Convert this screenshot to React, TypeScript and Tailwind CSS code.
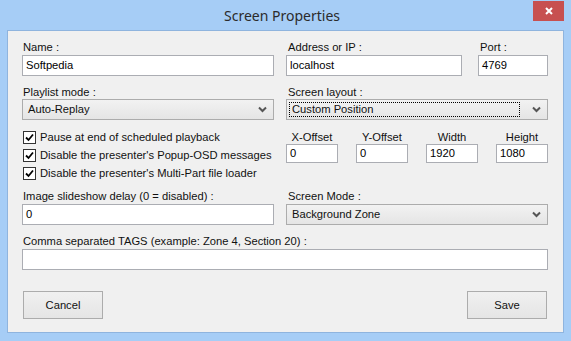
import React from 'react';

const font = "font-['Tahoma','Liberation_Sans',sans-serif]";

function Chevron() {
  return (
    <svg width="9" height="7" viewBox="0 0 9 7" className="shrink-0">
      <path d="M1 1.5 L4.5 5 L8 1.5" stroke="#555" strokeWidth="2" fill="none" />
    </svg>
  );
}

function Check() {
  return (
    <span className="flex h-[13px] w-[13px] shrink-0 items-center justify-center border border-[#333] bg-white">
      <svg width="9" height="9" viewBox="0 0 9 9">
        <path d="M1 4.5 L3.5 7 L8 1.5" stroke="#000" strokeWidth="1.8" fill="none" />
      </svg>
    </span>
  );
}

function Field({ value, className = '' }: { value: string; className?: string }) {
  return (
    <div className={`flex items-center border border-[#abadb3] bg-white px-[3px] text-black ${className}`}>
      {value}
    </div>
  );
}

function Select({ value, focused = false }: { value: string; focused?: boolean }) {
  return (
    <div className="flex h-[21px] items-center border border-[#acacac] bg-gradient-to-b from-[#f2f2f2] to-[#e5e5e5] pr-[6px]">
      <div className={`ml-[2px] flex h-[15px] flex-1 items-center px-[2px] ${focused ? 'border border-dotted border-black' : 'border border-transparent'}`}>
        {value}
      </div>
      <div className="ml-[12px]"><Chevron /></div>
    </div>
  );
}

function Label({ children, className = '' }: { children: React.ReactNode; className?: string }) {
  return <div className={`h-[13px] leading-[13px] ${className}`}>{children}</div>;
}

export default function App() {
  const checks = [
    'Pause at end of scheduled playback',
    "Disable the presenter's Popup-OSD messages",
    "Disable the presenter's Multi-Part file loader",
  ];
  const offsets = [
    ['X-Offset', '0'],
    ['Y-Offset', '0'],
    ['Width', '1920'],
    ['Height', '1080'],
  ];

  return (
    <div className={`flex h-[341px] w-[571px] flex-col bg-[#a6cdf6] text-[11.2px] text-[#111] ${font}`}>
      {/* title bar */}
      <div className="flex h-[30px] shrink-0 items-start">
        <div className="flex-1" />
        <div className="mt-[6px] font-['Segoe_UI','Noto_Sans',sans-serif] text-[14px] leading-[20px] text-[#2b2b2b]">
          Screen Properties
        </div>
        <div className="flex flex-1 justify-end pr-[7px]">
          <div className="mt-[1px] flex h-[20px] w-[31px] items-center justify-center bg-[#c75050]">
            <svg width="8" height="8" viewBox="0 0 8 8">
              <path d="M1 1 L7 7 M7 1 L1 7" stroke="#fff" strokeWidth="2" />
            </svg>
          </div>
        </div>
      </div>

      {/* content panel */}
      <div className="mx-[7px] h-[303px] border border-[#8fb4de] bg-[#f0f0f0] pl-[14px] pr-[15px] pt-[10px]">
        <div className="grid grid-cols-[252px_262px] gap-x-[12px]">
          {/* row 1 */}
          <div>
            <Label className="pl-[1px]">Name :</Label>
            <Field value="Softpedia" className="mt-[1px] h-[21px]" />
          </div>
          <div className="flex gap-[16px]">
            <div className="w-[176px]">
              <Label className="pl-[2px]">Address or IP :</Label>
              <Field value="localhost" className="mt-[1px] h-[21px]" />
            </div>
            <div className="flex-1">
              <Label className="pl-[2px]">Port :</Label>
              <Field value="4769" className="mt-[1px] h-[21px]" />
            </div>
          </div>

          {/* row 2 */}
          <div className="mt-[10px]">
            <Label className="pl-[1px]">Playlist mode :</Label>
            <Select value="Auto-Replay" />
          </div>
          <div className="mt-[10px]">
            <Label className="pl-[2px]">Screen layout :</Label>
            <Select value="Custom Position" focused />
          </div>

          {/* row 3 */}
          <div className="mt-[8px] flex flex-col">
            {checks.map((c) => (
              <div key={c} className="flex h-[18px] items-center gap-[4px] pl-[1px]">
                <Check />
                <span>{c}</span>
              </div>
            ))}
          </div>
          <div className="mt-[11px] grid grid-cols-4 gap-x-[18px]">
            {offsets.map(([l, v]) => (
              <div key={l}>
                <Label className="text-center">{l}</Label>
                <Field value={v} className="h-[19px] px-[1px]" />
              </div>
            ))}
          </div>

          {/* row 4 */}
          <div className="mt-[8px]">
            <Label className="pl-[1px]">Image slideshow delay (0 = disabled) :</Label>
            <Field value="0" className="mt-[1px] h-[21px]" />
          </div>
          <div className="mt-[8px]">
            <Label className="pl-[2px]">Screen Mode :</Label>
            <div className="mt-[1px]"><Select value="Background Zone" /></div>
          </div>

          {/* row 5 */}
          <div className="col-span-2 mt-[10px]">
            <Label className="pl-[1px]">Comma separated TAGS (example: Zone 4, Section 20) :</Label>
            <Field value="" className="mt-[1px] h-[21px]" />
          </div>
        </div>

        <div className="mt-[21px] flex justify-between pl-[1px] pr-[1px]">
          <button className="h-[28px] w-[80px] border border-[#acacac] bg-gradient-to-b from-[#f0f0f0] to-[#e5e5e5] text-[11.2px]">
            Cancel
          </button>
          <button className="h-[28px] w-[80px] border border-[#acacac] bg-gradient-to-b from-[#f0f0f0] to-[#e5e5e5] text-[11.2px]">
            Save
          </button>
        </div>
      </div>
      <div className="flex-1" />
    </div>
  );
}
